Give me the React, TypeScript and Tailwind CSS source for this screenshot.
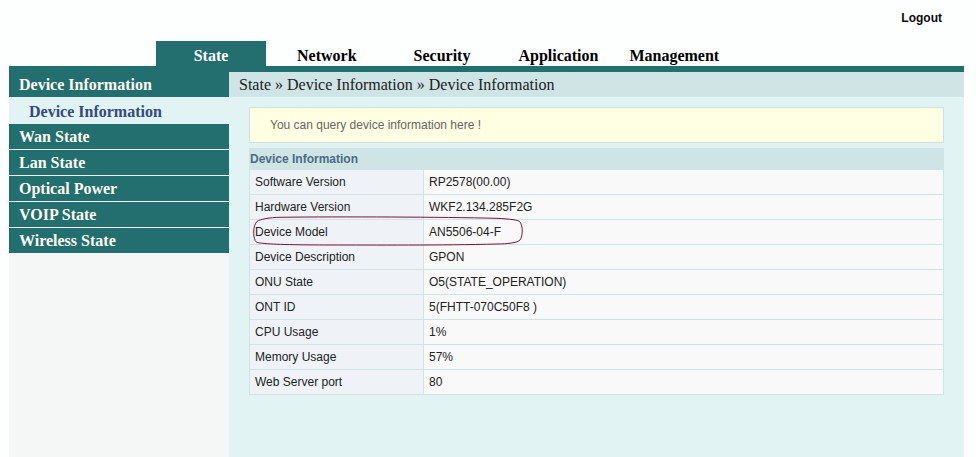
const menu = ['Wan State', 'Lan State', 'Optical Power', 'VOIP State', 'Wireless State'];
const rows = [
  ['Software Version', 'RP2578(00.00)'],
  ['Hardware Version', 'WKF2.134.285F2G'],
  ['Device Model', 'AN5506-04-F'],
  ['Device Description', 'GPON'],
  ['ONU State', 'O5(STATE_OPERATION)'],
  ['ONT ID', '5(FHTT-070C50F8 )'],
  ['CPU Usage', '1%'],
  ['Memory Usage', '57%'],
  ['Web Server port', '80'],
];

export default function App() {
  return (
    <div className="h-[457px] w-[976px] overflow-hidden bg-[#fdffff] font-['Liberation_Serif',serif]">
      {/* top */}
      <div className="flex h-[41px] justify-end pr-[34px] pt-[11px]">
        <span className="font-['Liberation_Sans',sans-serif] text-[12px] leading-[15px] font-bold text-[#0a0a0a]">Logout</span>
      </div>
      <div className="flex h-[25px] pl-[156px] text-[16px] leading-[30px] font-bold">
        <div className="w-[110px] bg-[#236e6e] text-center text-white">State</div>
        <div className="flex text-black">
          <span className="ml-[31px]">Network</span>
          <span className="ml-[57px]">Security</span>
          <span className="ml-[48px]">Application</span>
          <span className="ml-[31px]">Management</span>
        </div>
      </div>
      {/* main */}
      <div className="ml-[9px] flex h-[391px] w-[955px] flex-col">
        <div className="h-[6px] bg-[#236e6e]" />
        <div className="flex flex-1">
          <aside className="w-[220px] bg-[#f5f6f6]">
            <div className="-mt-[6px] h-[31px] bg-[#236e6e] pl-[10px] text-[16px] leading-[37px] font-bold text-[#fdfdf0]">
              Device Information
            </div>
            <div className="h-[27px] bg-[#e2f3f4] pl-[20px] text-[16px] leading-[29px] font-bold text-[#34497f]">
              Device Information
            </div>
            {menu.map((m, i) => (
              <div
                key={m}
                className={i === 0 ? 'h-[25px] bg-[#236e6e] pl-[10px] text-[16px] leading-[26px] font-bold text-[#fdfdf0]' : 'mt-[1px] h-[25px] bg-[#236e6e] pl-[10px] text-[16px] leading-[26px] font-bold text-[#fdfdf0]'}
              >
                {m}
              </div>
            ))}
          </aside>
          <div className="relative flex-1 bg-[#e2f3f4]">
            <div className="h-[25px] bg-[#cfe4e5] pl-[10px] text-[16px] leading-[26px] text-[#222]">
              State » Device Information » Device Information
            </div>
            <div className="font-['Liberation_Sans',sans-serif]">
              <div className="mt-[10px] ml-[20px] h-[36px] w-[695px] border border-[#cfe0e0] bg-[#ffffe3] pl-[20px] text-[12px] leading-[34px] text-[#666]">
                You can query device information here !
              </div>
              <div className="mt-[5px] ml-[20px] w-[695px]">
                <div className="h-[22px] bg-[#cfe4e5] pl-[1px] text-[12px] leading-[23px] font-bold text-[#4a6b85]">
                  Device Information
                </div>
                <div className="border-r border-b border-l border-[#cfe4e5]">
                  {rows.map(([label, value], i) => (
                    <div
                      key={label}
                      className={i === 0 ? 'flex h-[24px] text-[12px] leading-[24px] text-[#222]' : 'flex h-[25px] border-t border-[#cfe4e5] text-[12px] leading-[24px] text-[#222]'}
                    >
                      <div className="w-[174px] border-r border-[#cfe4e5] bg-[#eff3f7] pl-[5px]">{label}</div>
                      <div className="flex-1 bg-[#f9f9f9] pl-[5px]">{value}</div>
                    </div>
                  ))}
                </div>
              </div>
            </div>
            {/* hand drawn mark around the model row */}
            <svg className="absolute top-[144px] left-[23px]" width="276" height="32" viewBox="0 0 276 32" fill="none">
              <path
                d="M28 1.3 C90 0.5 190 1 245 2.3 C258 3 267 4 268 6 C271 10 271 20 268 24 C265 27 255 28 245 28 C190 29.5 120 29 78 29 C50 29 20 28.5 11 27.3 C6 27 3 26 3 24 C1 20 1 10 4.7 5.7 C8 3 18 1.5 28 1.3 Z"
                stroke="#7c1436"
                strokeWidth="1"
              />
            </svg>
          </div>
        </div>
      </div>
    </div>
  );
}
